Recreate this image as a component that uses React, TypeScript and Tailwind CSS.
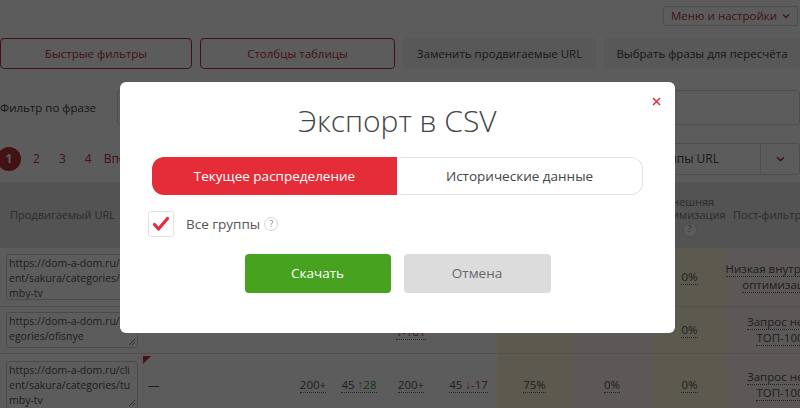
import React from 'react';

const cols = 'grid grid-cols-[140px_150px_46px_46px_58px_57px_75px_80px_75px_106px]';

const Dotted = ({ children, className = '' }: { children: React.ReactNode; className?: string }) => (
  <span className={`whitespace-nowrap border-b border-dotted border-[#666] leading-[14px] ${className}`}>{children}</span>
);

const Help = ({ className = '' }: { className?: string }) => (
  <span
    className={`inline-flex h-[14px] w-[14px] items-center justify-center rounded-full border border-[#d5d5d5] bg-white text-[8.5px] leading-none text-[#777] ${className}`}
  >
    ?
  </span>
);

const UrlBox = ({ lines, h }: { lines: string[]; h: string }) => (
  <div className={`relative ml-[6px] w-[132px] overflow-hidden rounded-[3px] border border-[#d0d0d0] bg-white px-[2px] pt-[1px] text-[10.5px] leading-[15px] text-[#555] ${h}`}>
    {lines.map((l) => (
      <div key={l} className="whitespace-nowrap">
        {l}
      </div>
    ))}
    <svg className="absolute bottom-[1px] right-[1px]" width="8" height="8" viewBox="0 0 8 8">
      <path d="M7 1L1 7M7 4L4 7" stroke="#888" strokeWidth="1" />
    </svg>
  </div>
);

export default function App() {
  return (
    <div className="relative h-[408px] w-[800px] overflow-hidden bg-white font-['Open_Sans',sans-serif] text-[11.5px] text-[#333]">
      {/* top bar */}
      <div className="flex justify-end pt-[6px] pr-[2px]">
        <button className="flex h-[20px] items-center gap-[5px] rounded-[3px] border border-[#d8d8d8] px-[7px] text-[11.5px] text-[#b8333a]">
          Меню и настройки
          <svg width="8" height="6" viewBox="0 0 8 6">
            <path d="M1 1.5L4 4.5L7 1.5" stroke="#b8333a" strokeWidth="1.4" fill="none" />
          </svg>
        </button>
      </div>

      <div className="mt-[12px] flex gap-[8px]">
        <button className="h-[31px] w-[192px] rounded-[4px] border border-[#b8333a] text-[11.5px] text-[#b8333a]">Быстрые фильтры</button>
        <button className="h-[31px] w-[195px] rounded-[4px] border border-[#b8333a] text-[11.5px] text-[#b8333a]">Столбцы таблицы</button>
        <button className="h-[31px] w-[193px] rounded-[4px] bg-[#f4f4f4] text-[11.5px] text-[#444]">Заменить продвигаемые URL</button>
        <button className="h-[31px] w-[196px] rounded-[4px] bg-[#f4f4f4] text-[11.5px] text-[#444]">Выбрать фразы для пересчёта</button>
      </div>

      {/* phrase filter */}
      <div className="mt-[21px] flex h-[35px] items-center">
        <span className="w-[117px] text-[#444]">Фильтр по фразе</span>
        <div className="h-full flex-1 rounded-[3px] border border-[#d8d8d8] bg-white" />
      </div>

      {/* pagination */}
      <div className="mt-[18px] flex h-[32px] items-center text-[12px] text-[#b8333a]">
        <span className="-ml-[3px] flex h-[24px] w-[24px] items-center justify-center rounded-full bg-[#b8333a] font-bold text-white">1</span>
        <span className="ml-[12px]">2</span>
        <span className="ml-[19px]">3</span>
        <span className="ml-[19px]">4</span>
        <span className="ml-[12px]">Вперёд</span>
        <div className="ml-auto flex h-full w-[330px] rounded-[3px] border border-[#d8d8d8] bg-white">
          <div className="flex flex-1 items-center justify-end pr-[41px] text-[#444]">Все группы URL</div>
          <div className="flex w-[39px] items-center justify-center border-l border-[#d8d8d8]">
            <svg width="9" height="6" viewBox="0 0 9 6">
              <path d="M1 1.2L4.5 4.6L8 1.2" stroke="#b8333a" strokeWidth="1.6" fill="none" />
            </svg>
          </div>
        </div>
      </div>

      {/* table */}
      <div className="mt-[7px]">
        <div className={`${cols} h-[65px] bg-[#e6e6e6] text-[11px] leading-[13px] text-[#777]`}>
          <div className="col-span-8 flex items-center pl-[10px]">
            Продвигаемый URL <Help className="ml-[5px]" />
          </div>
          <div className="flex flex-col items-center justify-center pt-[2px]">
            <span>Внешняя</span>
            <span>оптимизация</span>
            <Help className="mt-[2px]" />
          </div>
          <div className="flex items-center pl-[6px]">Пост-фильтры</div>
        </div>

        {/* row 1 */}
        <div className={`${cols} border-t border-[#e0e0e0] py-[6px] text-[#555]`}>
          <UrlBox lines={['https://dom-a-dom.ru/cli', 'ent/sakura/categories/tu', 'mby-tv']} h="h-[46px]" />
          <div /><div /><div /><div /><div />
          <div className="-my-[6px] bg-[#fffad8]" />
          <div className="-my-[6px] bg-[#fff4f4]" />
          <div className="-my-[6px] flex items-center justify-center bg-[#fffad8]"><Dotted>0%</Dotted></div>
          <div className="-my-[6px] flex flex-col items-center justify-center gap-[1px] bg-[#fff4f4]">
            <Dotted>Низкая внутренняя</Dotted>
            <Dotted>оптимизация</Dotted>
          </div>
        </div>

        {/* row 2 */}
        <div className={`${cols} border-t border-[#e0e0e0] py-[5px] text-[#555]`}>
          <UrlBox lines={['https://dom-a-dom.ru/cat', 'egories/ofisnye']} h="h-[36px]" />
          <div /><div /><div />
          <div className="flex flex-col items-center justify-end pb-[8px]">
            <Dotted className="text-[#b8333a]">↓-181</Dotted>
          </div>
          <div />
          <div className="-my-[5px] bg-[#fffad8]" />
          <div className="-my-[5px] bg-[#fff4f4]" />
          <div className="-my-[5px] flex items-center justify-center bg-[#fffad8]"><Dotted>0%</Dotted></div>
          <div className="-my-[5px] flex flex-col items-center justify-center gap-[1px] bg-[#fff4f4]">
            <Dotted>Запрос не в</Dotted>
            <Dotted>ТОП-100</Dotted>
          </div>
        </div>

        {/* row 3 */}
        <div className={`${cols} border-t border-[#e0e0e0] py-[7px] text-[#555]`}>
          <UrlBox lines={['https://dom-a-dom.ru/cli', 'ent/sakura/categories/tu', 'mby-tv']} h="h-[48px]" />
          <div className="relative -my-[7px] flex items-center pl-[8px]">
            <svg className="absolute left-[3px] top-[2px]" width="8" height="8" viewBox="0 0 8 8">
              <path d="M0 0H8L0 8Z" fill="#b8333a" />
            </svg>
            —
          </div>
          <div className="flex items-center justify-center"><Dotted>200+</Dotted></div>
          <div className="flex items-center justify-center">
            <Dotted>
              45 <span className="text-[#2f9a2f]">↑28</span>
            </Dotted>
          </div>
          <div className="flex items-center justify-center"><Dotted>200+</Dotted></div>
          <div className="flex items-center justify-center">
            <Dotted>
              45 <span className="text-[#b8333a]">↓-17</span>
            </Dotted>
          </div>
          <div className="-my-[7px] flex items-center justify-center bg-[#fffad8]"><Dotted>75%</Dotted></div>
          <div className="-my-[7px] flex items-center justify-center bg-[#fff4f4]"><Dotted>0%</Dotted></div>
          <div className="-my-[7px] flex items-center justify-center bg-[#fffad8]"><Dotted>0%</Dotted></div>
          <div className="-my-[7px] flex flex-col items-center justify-center gap-[1px] bg-[#fff4f4]">
            <Dotted>Запрос не в</Dotted>
            <Dotted>ТОП-100</Dotted>
          </div>
        </div>
      </div>

      {/* overlay */}
      <div className="absolute inset-0 bg-black/[0.64]" />

      {/* modal */}
      <div className="absolute left-[120px] top-[82px] w-[555px] rounded-[6px] bg-white px-[32px] pb-[40px] pt-[19px]">
        <button className="absolute right-[14px] top-[15px]">
          <svg width="9" height="9" viewBox="0 0 9 9">
            <path d="M1 1L8 8M8 1L1 8" stroke="#e52d3a" strokeWidth="1.5" />
          </svg>
        </button>
        <h2 className="text-center text-[30px] font-light leading-[40px] text-[#444]">Экспорт в CSV</h2>

        <div className="mt-[16px] flex h-[38px]">
          <button className="flex-1 rounded-l-[12px] bg-[#e52d3a] text-[13.5px] text-white">Текущее распределение</button>
          <button className="flex-1 rounded-r-[12px] border border-l-0 border-[#e4e4e4] bg-white text-[13.5px] text-[#444]">
            Исторические данные
          </button>
        </div>

        <div className="-ml-[4px] mt-[16px] flex items-center">
          <span className="flex h-[26px] w-[26px] items-center justify-center rounded-[3px] border border-[#e2e2e2] bg-white">
            <svg width="18" height="16" viewBox="0 0 18 16">
              <path d="M2.5 8.5L6.5 13L15.5 2.5" stroke="#e52d3a" strokeWidth="3.2" fill="none" strokeLinecap="round" strokeLinejoin="round" />
            </svg>
          </span>
          <span className="ml-[12px] text-[13.5px] text-[#555]">Все группы</span>
          <Help className="ml-[4px]" />
        </div>

        <div className="mt-[17px] flex justify-center gap-[13px]">
          <button className="h-[39px] w-[146px] rounded-[4px] bg-[#47a21f] text-[13.5px] text-white">Скачать</button>
          <button className="h-[39px] w-[147px] rounded-[4px] bg-[#dcdcdc] text-[13.5px] text-[#666]">Отмена</button>
        </div>
      </div>
    </div>
  );
}
